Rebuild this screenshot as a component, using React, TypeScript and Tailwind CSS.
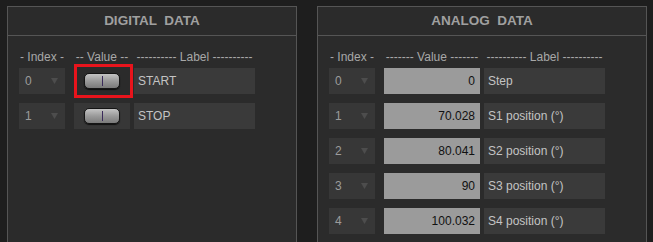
const digitalRows = [
  { index: 0, label: "START" },
  { index: 1, label: "STOP" },
];

const analogRows = [
  { index: 0, value: "0", label: "Step" },
  { index: 1, value: "70.028", label: "S1 position (°)" },
  { index: 2, value: "80.041", label: "S2 position (°)" },
  { index: 3, value: "90", label: "S3 position (°)" },
  { index: 4, value: "100.032", label: "S4 position (°)" },
];

const IndexBox = ({ index }: { index: number }) => (
  <div className="w-[46px] h-[26px] bg-[#373737] flex items-center justify-between pl-[6px] pr-[7px] text-[12px] text-[#9c9c9c]">
    <span>{index}</span>
    <svg width="7" height="6" viewBox="0 0 7 6">
      <path d="M0 0 L7 0 L3.5 6 Z" fill="#4d4d4d" />
    </svg>
  </div>
);

const Toggle = () => (
  <div className="w-[36px] h-[16px] rounded-[5px] border border-[#151515] bg-gradient-to-b from-[#c4c4c4] via-[#9a9a9a] to-[#7a7a7a] flex items-center justify-center shadow-[0_1px_1px_rgba(0,0,0,0.7)]">
    <div className="w-px h-[10px] bg-[#3a2a5a]" />
  </div>
);

const Panel = ({ title, width, children }: { title: string; width: string; children: React.ReactNode }) => (
  <div className={`${width} h-[260px] shrink-0 border border-[#555555] bg-[#2b2b2b] flex flex-col`}>
    <div className="h-[29px] shrink-0 border-b border-[#555555] flex items-center justify-center">
      <span className="text-[13.5px] font-bold text-[#a0a0a0] whitespace-pre">{title}</span>
    </div>
    <div className="pt-[14px] pl-[11px] flex flex-col gap-[4px] text-[12px]">{children}</div>
  </div>
);

export default function App() {
  return (
    <div
      className="w-[653px] h-[242px] overflow-hidden bg-[#1e1e1e] flex gap-[20px] pl-[7px] pt-[6px]"
      style={{ fontFamily: '"Liberation Sans", Arial, sans-serif' }}
    >
      <Panel title="DIGITAL  DATA" width="w-[290px]">
        <div className="flex h-[14px] items-center text-[#a8a8a8] whitespace-pre">
          <div className="w-[46px] text-center">- Index -</div>
          <div className="w-[56px] ml-[9px] text-center">-- Value --</div>
          <div className="w-[121px] ml-[4px] text-center">---------- Label ----------</div>
        </div>
        <div className="flex flex-col gap-[9px]">
          {digitalRows.map((row) => (
            <div key={row.index} className="flex items-center">
              <IndexBox index={row.index} />
              <div
                className={`relative w-[56px] h-[26px] ml-[9px] flex items-center justify-center ${
                  row.index === 0 ? "bg-[#2b2b2b]" : "bg-[#373737]"
                }`}
              >
                <Toggle />
                {row.index === 0 && (
                  <div className="absolute left-0 -right-[3px] -top-[4px] -bottom-[4px] border-[3px] border-[#e8141c]" />
                )}
              </div>
              <div className="w-[121px] h-[26px] ml-[4px] bg-[#3a3a3a] flex items-center pl-[4px] text-[#c4c4c4]">
                {row.label}
              </div>
            </div>
          ))}
        </div>
      </Panel>

      <Panel title="ANALOG  DATA" width="w-[330px]">
        <div className="flex h-[14px] items-center text-[#a8a8a8] whitespace-pre">
          <div className="w-[46px] text-center">- Index -</div>
          <div className="w-[96px] ml-[9px] text-center">------- Value -------</div>
          <div className="w-[121px] ml-[4px] text-center">---------- Label ----------</div>
        </div>
        <div className="flex flex-col gap-[9px]">
          {analogRows.map((row) => (
            <div key={row.index} className="flex items-center">
              <IndexBox index={row.index} />
              <div className="w-[96px] h-[26px] ml-[9px] bg-[#9b9b9b] flex items-center justify-end pr-[5px] text-[#111111]">
                {row.value}
              </div>
              <div className="w-[121px] h-[26px] ml-[4px] bg-[#3a3a3a] flex items-center pl-[4px] text-[#c4c4c4]">
                {row.label}
              </div>
            </div>
          ))}
        </div>
      </Panel>
    </div>
  );
}
